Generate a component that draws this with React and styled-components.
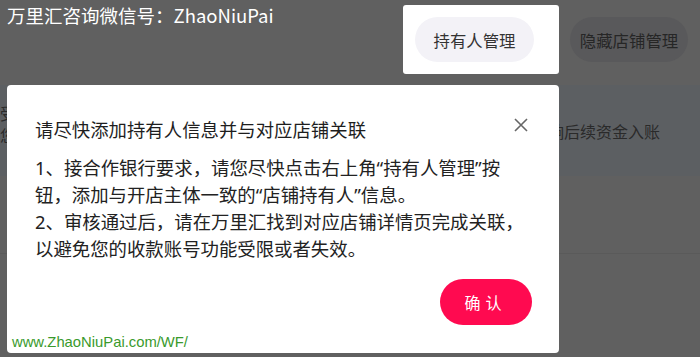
import React from 'react'
import styled, { createGlobalStyle } from 'styled-components'

const GlobalStyle = createGlobalStyle`
  html, body {
    margin: 0;
    padding: 0;
    background: #606060;
  }
  body {
    font-family: "Noto Sans", "Noto Sans CJK SC", sans-serif;
  }
`

const Page = styled.div`
  position: relative;
  width: 700px;
  height: 357px;
  overflow: hidden;
  background: #606060;
`

const Header = styled.div`
  height: 85px;
  box-sizing: border-box;
  padding: 5px 12px 0 0;
  display: flex;
  justify-content: flex-end;
  align-items: flex-start;
  gap: 11px;
`

const Spotlight = styled.div`
  background: #fff;
  border-radius: 3px;
  height: 69px;
  box-sizing: border-box;
  padding: 12px 25px 12px 12px;
  display: flex;
  align-items: center;
`

const Pill = styled.div`
  height: 45px;
  width: ${(p) => p.width}px;
  box-sizing: border-box;
  border-radius: 23px;
  display: flex;
  align-items: center;
  justify-content: center;
  font-family: "Noto Sans CJK SC", sans-serif;
  font-size: 16.4px;
  background: ${(p) => (p.dim ? '#59595b' : '#f3f2f7')};
  color: ${(p) => (p.dim ? '#262626' : '#333')};
  margin-top: ${(p) => (p.dim ? '12px' : '0')};
`

const Notice = styled.div`
  height: 91px;
  background: #5c5f62;
  display: flex;
  justify-content: space-between;
  align-items: center;
  padding-right: 40px;
  font-family: "Noto Sans CJK SC", sans-serif;
  font-size: 16px;
  color: #2a2a2a;
`

const NoticeLeft = styled.div`
  line-height: 22px;
  margin-top: -14px;
`

const Divider = styled.div`
  margin-top: 77px;
  height: 1px;
  background: #5a5a5a;
`

const Watermark = styled.div`
  position: absolute;
  left: 7px;
  top: 2px;
  font-family: "Noto Sans CJK SC", sans-serif;
  font-size: 18.5px;
  color: #fff;
  line-height: 26px;
`

const SiteMark = styled.div`
  position: absolute;
  left: 12px;
  top: 332px;
  font-family: "Liberation Sans", sans-serif;
  font-size: 14.8px;
  line-height: 20px;
  color: #3a9a2c;
`

const Modal = styled.div`
  position: absolute;
  left: 7px;
  top: 85px;
  width: 552px;
  height: 268px;
  box-sizing: border-box;
  background: #fff;
  border-radius: 4px;
  padding: 31px 27px 28px 28px;
  display: flex;
  flex-direction: column;
  font-family: "Noto Sans", "Noto Sans CJK SC", sans-serif;
`

const TitleRow = styled.div`
  display: flex;
  justify-content: space-between;
  align-items: center;
  margin-bottom: 11px;
`

const Title = styled.div`
  font-family: "Noto Sans CJK SC", sans-serif;
  font-size: 18.4px;
  line-height: 27px;
  color: #1e1e1e;
`

const Close = styled.button`
  border: 0;
  background: none;
  padding: 0;
  margin: -10px 3px 0 0;
  width: 16px;
  height: 16px;
  display: flex;
  cursor: pointer;
`

const Body = styled.div`
  font-size: 18.4px;
  line-height: 27px;
  color: #222;
  white-space: nowrap;
`

const Footer = styled.div`
  margin-top: auto;
  display: flex;
  justify-content: flex-end;
`

const Confirm = styled.button`
  width: 92px;
  height: 46px;
  border: 0;
  border-radius: 23px;
  background: #ff0a50;
  color: #fff;
  font-family: "Noto Sans CJK SC", sans-serif;
  font-size: 16px;
  letter-spacing: 5px;
  padding-left: 5px;
  cursor: pointer;
`

export default function App() {
  return (
    <Page>
      <GlobalStyle />
      <Header>
        <Spotlight>
          <Pill width={119}>持有人管理</Pill>
        </Spotlight>
        <Pill width={118} dim>隐藏店铺管理</Pill>
      </Header>
      <Notice>
        <NoticeLeft>
          <div>受</div>
          <div>您</div>
        </NoticeLeft>
        <div>影响后续资金入账</div>
      </Notice>
      <Divider />
      <Watermark>万里汇咨询微信号：ZhaoNiuPai</Watermark>
      <Modal>
        <TitleRow>
          <Title>请尽快添加持有人信息并与对应店铺关联</Title>
          <Close aria-label="关闭">
            <svg width="16" height="16" viewBox="0 0 16 16">
              <path d="M2 2L14 14M14 2L2 14" stroke="#666" strokeWidth="1.6" fill="none" />
            </svg>
          </Close>
        </TitleRow>
        <Body>
          <div>1、接合作银行要求，请您尽快点击右上角“持有人管理”按</div>
          <div>钮，添加与开店主体一致的“店铺持有人”信息。</div>
          <div>2、审核通过后，请在万里汇找到对应店铺详情页完成关联，</div>
          <div>以避免您的收款账号功能受限或者失效。</div>
        </Body>
        <Footer>
          <Confirm>确认</Confirm>
        </Footer>
      </Modal>
      <SiteMark>www.ZhaoNiuPai.com/WF/</SiteMark>
    </Page>
  )
}
